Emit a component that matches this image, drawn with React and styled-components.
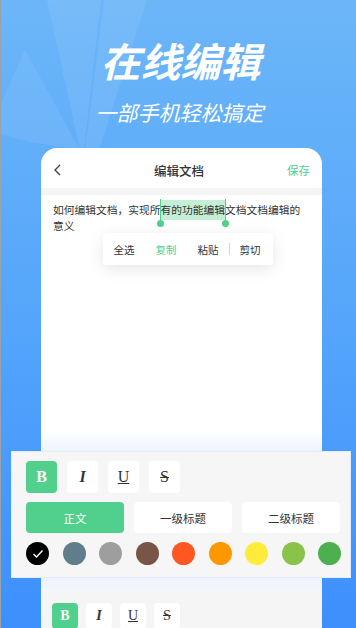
import React from "react";
import styled, { createGlobalStyle } from "styled-components";

const GlobalStyle = createGlobalStyle`
  html, body {
    margin: 0;
    padding: 0;
  }
  body {
    font-family: "Noto Sans CJK SC", "Noto Sans", sans-serif;
  }
`;

const GREEN = "#50d08c";

const Page = styled.div`
  position: relative;
  width: 356px;
  height: 628px;
  box-sizing: border-box;
  overflow: hidden;
  border-left: 1px solid #9aa2ab;
  background: linear-gradient(180deg, #6cb6f8 0%, #55a6fb 50%, #3d8ffd 100%);
`;

const Deco = styled.svg`
  position: absolute;
  left: -1px;
  top: 0;
`;

const Hero = styled.div`
  position: relative;
  display: flex;
  flex-direction: column;
  align-items: center;
  padding-top: 38px;
  height: 110px;
  color: #fff;
`;

const Title = styled.h1`
  margin: 0 0 0 4px;
  font-size: 40px;
  line-height: 44px;
  font-weight: 700;
  font-style: italic;
`;

const Subtitle = styled.p`
  margin: 18px 0 0 2px;
  font-size: 21px;
  line-height: 24px;
  font-weight: 400;
  font-style: italic;
`;

const Phone = styled.div`
  position: relative;
  margin: 0 34px 0 40px;
  background: #fff;
  border-radius: 16px 16px 0 0;
  display: flex;
  flex-direction: column;
`;

const PhoneHeader = styled.div`
  height: 47px;
  padding: 4px 12px 0;
  box-sizing: border-box;
  display: flex;
  align-items: center;
  justify-content: space-between;
  border-bottom: 7px solid #f5f5f5;
`;

const HeaderTitle = styled.span`
  font-size: 12.5px;
  color: #333;
  font-weight: 500;
  margin-left: 8px;
`;

const Save = styled.span`
  font-size: 11.5px;
  color: ${GREEN};
`;

const Body = styled.div`
  position: relative;
  height: 397px;
  padding: 7px 12px 0;
  box-sizing: border-box;
  background: linear-gradient(
    180deg,
    #fff 0px,
    #fff 236px,
    #edf4fe 256px,
    #edf4fe 383px,
    #f3f6fb 397px
  );
`;

const Paragraph = styled.p`
  margin: 0;
  width: 256px;
  font-size: 10.75px;
  line-height: 16px;
  color: #333;
`;

const Selected = styled.span`
  position: relative;
  background: #c3efd6;
  padding: 2px 0 3px;
`;

const Handle = styled.span`
  position: absolute;
  top: -1px;
  bottom: -4px;
  width: 1px;
  background: ${GREEN};
  ${(p) => (p.$side === "left" ? "left: -1px;" : "right: -1px;")}
  &::after {
    content: "";
    position: absolute;
    left: -3px;
    bottom: -3px;
    width: 7px;
    height: 7px;
    border-radius: 50%;
    background: ${GREEN};
  }
`;

const Menu = styled.div`
  position: absolute;
  left: 62px;
  top: 38px;
  width: 170px;
  height: 32px;
  background: #fff;
  border-radius: 3px;
  box-shadow: 0 4px 16px rgba(0, 0, 0, 0.1);
  display: flex;
  align-items: center;
`;

const MenuItem = styled.span`
  position: relative;
  width: 42px;
  text-align: center;
  font-size: 10.5px;
  color: ${(p) => (p.$active ? GREEN : "#333")};
  & + &::before {
    content: "";
    position: absolute;
    left: 0;
    top: 50%;
    margin-top: -6px;
    width: 1px;
    height: 12px;
    background: #d6d6d6;
  }
`;

const BottomBar = styled.div`
  background: #f5f5f5;
  padding: 11px 11px 20px;
  display: flex;
  gap: 8px;
`;

const FormatButton = styled.span`
  width: ${(p) => (p.$small ? 26 : 31)}px;
  height: ${(p) => (p.$small ? 26 : 32)}px;
  border-radius: 4px;
  display: flex;
  align-items: center;
  justify-content: center;
  background: ${(p) => (p.$on ? GREEN : "#fff")};
  color: ${(p) => (p.$on ? "#fff" : "#333")};
  font-family: "Liberation Serif", "DejaVu Serif", serif;
  font-size: ${(p) => (p.$small ? 14 : 16)}px;
  font-weight: ${(p) => (p.$kind === "b" || p.$kind === "i" ? 700 : 400)};
  font-style: ${(p) => (p.$kind === "i" ? "italic" : "normal")};
  text-decoration: ${(p) =>
    p.$kind === "u" ? "underline" : p.$kind === "s" ? "line-through" : "none"};
`;

const Panel = styled.div`
  position: absolute;
  left: 10px;
  top: 451px;
  width: 340px;
  height: 127px;
  box-sizing: border-box;
  padding: 9px 12px 0 14px;
  background: #f6f6f6;
  border: 1px solid #e2edfb;
  display: flex;
  flex-direction: column;
  gap: 9px;
`;

const ButtonRow = styled.div`
  display: flex;
  gap: 10px;
`;

const StyleRow = styled.div`
  display: grid;
  grid-template-columns: repeat(3, 1fr);
  gap: 10px;
  width: 314px;
`;

const StyleButton = styled.span`
  height: 31px;
  border-radius: 4px;
  display: flex;
  align-items: center;
  justify-content: center;
  font-size: 11.5px;
  background: ${(p) => (p.$on ? GREEN : "#fff")};
  color: ${(p) => (p.$on ? "#fff" : "#333")};
`;

const Swatches = styled.div`
  display: flex;
  justify-content: space-between;
  width: 315px;
`;

const Swatch = styled.span`
  width: 23px;
  height: 23px;
  border-radius: 50%;
  background: ${(p) => p.$color};
  display: flex;
  align-items: center;
  justify-content: center;
`;

const formats = [
  { kind: "b", label: "B" },
  { kind: "i", label: "I" },
  { kind: "u", label: "U" },
  { kind: "s", label: "S" },
];

const colors = [
  "#000000",
  "#607d8b",
  "#9e9e9e",
  "#795548",
  "#ff5722",
  "#ff9800",
  "#ffeb3b",
  "#8bc34a",
  "#4caf50",
];

export default function App() {
  return (
    <>
      <GlobalStyle />
      <Page>
        <Deco width="160" height="150" viewBox="0 0 160 150">
          <polygon points="47,0 101,0 84,150 80,150" fill="#fff" opacity="0.08" />
          <polygon points="104,0 147,0 99,150 85,150" fill="#fff" opacity="0.08" />
          <polygon points="25,50 0,106 0,134 30,142 80,150" fill="#fff" opacity="0.07" />
        </Deco>

        <Hero>
          <Title>在线编辑</Title>
          <Subtitle>一部手机轻松搞定</Subtitle>
        </Hero>

        <Phone>
          <PhoneHeader>
            <svg width="10" height="12" viewBox="0 0 10 12">
              <polyline
                points="7,1 2,6 7,11"
                fill="none"
                stroke="#444"
                strokeWidth="1.4"
              />
            </svg>
            <HeaderTitle>编辑文档</HeaderTitle>
            <Save>保存</Save>
          </PhoneHeader>

          <Body>
            <Paragraph>
              如何编辑文档，实现所
              <Selected>
                <Handle $side="left" />
                有的功能编辑
                <Handle $side="right" />
              </Selected>
              文档文档编辑的意义
            </Paragraph>
            <Menu>
              <MenuItem>全选</MenuItem>
              <MenuItem $active>复制</MenuItem>
              <MenuItem>粘贴</MenuItem>
              <MenuItem>剪切</MenuItem>
            </Menu>
          </Body>

          <BottomBar>
            {formats.map((f) => (
              <FormatButton key={f.kind} $small $kind={f.kind} $on={f.kind === "b"}>
                {f.label}
              </FormatButton>
            ))}
          </BottomBar>
        </Phone>

        <Panel>
          <ButtonRow>
            {formats.map((f) => (
              <FormatButton key={f.kind} $kind={f.kind} $on={f.kind === "b"}>
                {f.label}
              </FormatButton>
            ))}
          </ButtonRow>
          <StyleRow>
            <StyleButton $on>正文</StyleButton>
            <StyleButton>一级标题</StyleButton>
            <StyleButton>二级标题</StyleButton>
          </StyleRow>
          <Swatches>
            {colors.map((c, i) => (
              <Swatch key={c} $color={c}>
                {i === 0 && (
                  <svg width="12" height="10" viewBox="0 0 12 10">
                    <polyline
                      points="1.5,5 4.5,8 10.5,1.5"
                      fill="none"
                      stroke="#fff"
                      strokeWidth="1.4"
                    />
                  </svg>
                )}
              </Swatch>
            ))}
          </Swatches>
        </Panel>
      </Page>
    </>
  );
}
